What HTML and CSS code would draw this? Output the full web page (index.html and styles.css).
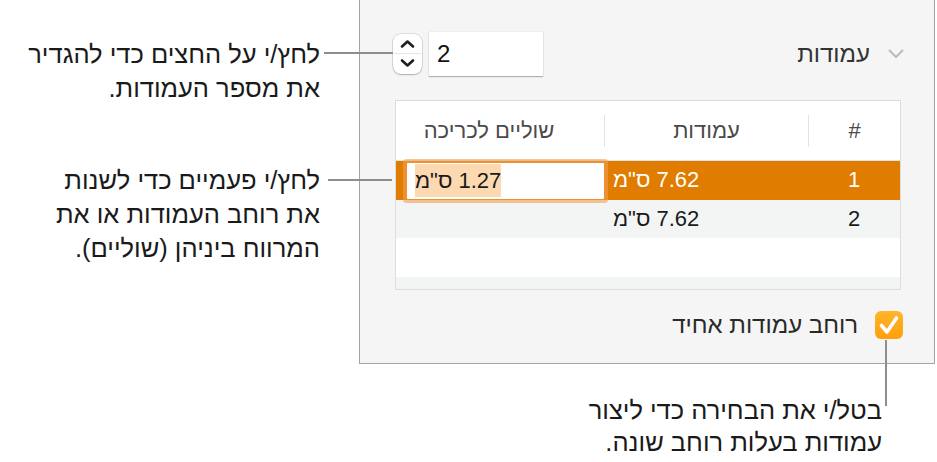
FILE: index.html
```html
<!DOCTYPE html>
<html lang="he">
<head>
<meta charset="utf-8">
<title>עמודות</title>
<link rel="stylesheet" href="styles.css">
</head>
<body>
<div class="page">
  <div class="notes">
    <p class="note note-arrows">לחץ/י על החצים כדי להגדיר<br>את מספר העמודות.</p>
    <p class="note note-width">לחץ/י פעמיים כדי לשנות<br>את רוחב העמודות או את<br>המרווח ביניהן (שוליים).</p>
  </div>
  <div class="right">
    <section class="panel">
      <div class="count-row">
        <div class="stepper">
          <svg width="29" height="40" viewBox="0 0 29 40">
            <path d="M9 12.5 L14.5 7.5 L20 12.5" fill="none" stroke="#1f1f1f" stroke-width="2.6" stroke-linecap="round" stroke-linejoin="round"/>
            <line x1="1" y1="19.5" x2="28" y2="19.5" stroke="#e6e6e6" stroke-width="1"/>
            <path d="M9 26.5 L14.5 31.5 L20 26.5" fill="none" stroke="#1f1f1f" stroke-width="2.6" stroke-linecap="round" stroke-linejoin="round"/>
          </svg>
        </div>
        <div class="count-input">2</div>
        <div class="spacer"></div>
        <span class="count-label">עמודות</span>
        <svg class="disclosure" width="16" height="10" viewBox="0 0 16 10">
          <path d="M1.5 1.5 L8 8 L14.5 1.5" fill="none" stroke="#b9b9b9" stroke-width="1.8" stroke-linecap="round" stroke-linejoin="round"/>
        </svg>
      </div>
      <div class="table">
        <div class="thead">
          <div class="th th-num">#</div>
          <div class="th th-cols">עמודות</div>
          <div class="th th-gutter">שוליים לכריכה</div>
        </div>
        <div class="tr selected">
          <div class="td num">1</div>
          <div class="td val">7.62 ס"מ</div>
          <div class="td edit"><div class="field"><span class="sel">1.27 ס"מ</span></div></div>
        </div>
        <div class="tr alt">
          <div class="td num">2</div>
          <div class="td val">7.62 ס"מ</div>
          <div class="td edit"></div>
        </div>
        <div class="tr"></div>
        <div class="tr alt"></div>
      </div>
      <div class="check-row">
        <span class="check-label">רוחב עמודות אחיד</span>
        <span class="checkbox">
          <svg width="28" height="28" viewBox="0 0 28 28">
            <path d="M6.5 14.5 L12 21 L21.5 7" fill="none" stroke="#ffffff" stroke-width="3.6" stroke-linecap="round" stroke-linejoin="round"/>
          </svg>
        </span>
      </div>
    </section>
    <p class="note note-check">בטל/י את הבחירה כדי ליצור<br>עמודות בעלות רוחב שונה.</p>
  </div>
</div>
</body>
</html>
```
FILE: styles.css
```css
* { box-sizing: border-box; margin: 0; padding: 0; }
html, body { width: 937px; height: 462px; overflow: hidden; background: #ffffff; }
body { font-family: "Liberation Sans", Arial, sans-serif; color: #1a1a1a; }

.page { display: flex; height: 462px; position: relative; }
.notes { width: 359px; flex: none; }

.note {
  direction: rtl;
  text-align: right;
  font-size: 25.5px;
  line-height: 34px;
  color: #1a1a1a;
  position: relative;
}
.note-arrows { margin-top: 37px; width: 320px; }
.note-width { margin-top: 58px; width: 320px; }
.note-arrows::after {
  content: "";
  position: absolute;
  left: 324px;
  top: 15px;
  width: 69px;
  height: 2px;
  background: #8e8e8e;
}
.note-width::after {
  content: "";
  position: absolute;
  left: 328px;
  top: 16px;
  width: 64px;
  height: 2px;
  background: #8e8e8e;
}

.right { width: 576px; flex: none; display: flex; flex-direction: column; }

.panel {
  height: 364px;
  background: #f5f5f5;
  border: 1px solid #a4a4a4;
  border-top: none;
  padding: 32px 30px 0 33px;
  display: flex;
  flex-direction: column;
}

.count-row { height: 44px; display: flex; align-items: center; }
.stepper {
  width: 29px;
  height: 40px;
  border-radius: 8px;
  background: #ffffff;
  box-shadow: 0 0 0 0.5px rgba(0,0,0,0.18), 0 1px 1.5px rgba(0,0,0,0.22);
  margin-right: 7px;
  display: flex;
}
.count-input {
  width: 114px;
  height: 44px;
  background: #ffffff;
  box-shadow: 0 1px 1px rgba(0,0,0,0.25), 0 0 0 0.5px rgba(0,0,0,0.06);
  font-size: 24px;
  line-height: 44px;
  padding-left: 8px;
  color: #111;
}
.spacer { flex: 1; }
.count-label {
  direction: rtl;
  font-size: 24px;
  color: #333;
  margin-right: 18px;
}
.disclosure { display: block; }

.table {
  margin: 24px 3px 0 2px;
  height: 190px;
  border: 1px solid #dcdcdc;
  background: #ffffff;
  overflow: hidden;
  direction: rtl;
}
.thead, .tr {
  display: grid;
  grid-template-columns: 92px 204px 1fr;
}
.thead {
  height: 60px;
  border-bottom: 1px solid #e4e4e4;
  align-items: center;
}
.th {
  height: 32px;
  line-height: 32px;
  font-size: 22px;
  color: #4a4a4a;
  text-align: center;
}
.th-num { border-left: 1px solid #e2e2e2; }
.th-cols { border-left: 1px solid #e2e2e2; }
.th-gutter { padding-right: 22px; }

.tr { height: 39px; background: #ffffff; }
.tr.alt { background: #f3f5f5; height: 38px; }
.tr.selected { background: #e07c00; color: #ffffff; }
.td { font-size: 22px; line-height: 38px; color: inherit; }
.tr.alt .td { color: #1a1a1a; }
.num { text-align: center; }
.val { text-align: left; padding-left: 9px; }
.edit { padding: 2px 0 0 11px; }
.field {
  position: relative;
  z-index: 1;
  height: 36px;
  background: #ffffff;
  box-shadow: 0 0 0 4px rgba(244, 160, 80, 0.6);
  border-radius: 1px;
  text-align: left;
  padding-left: 8px;
  color: #1a1a1a;
  line-height: 36px;
}
.sel {
  background: #fdd9b1;
  padding: 4px 0;
}

.check-row {
  margin-top: 20px;
  height: 29px;
  display: flex;
  justify-content: flex-end;
  align-items: center;
  padding-right: 1px;
}
.check-label {
  direction: rtl;
  font-size: 24px;
  color: #2a2a2a;
  margin-right: 17px;
}
.checkbox {
  width: 28px;
  height: 28px;
  border-radius: 6px;
  background: linear-gradient(#ffb52a, #ff9f0c);
  display: flex;
}

.note-check {
  margin-top: 30px;
  width: 523px;
  line-height: 32px;
}
.note-check::after {
  content: "";
  position: absolute;
  left: 526px;
  top: -54px;
  width: 2px;
  height: 66px;
  background: #8e8e8e;
}
```
